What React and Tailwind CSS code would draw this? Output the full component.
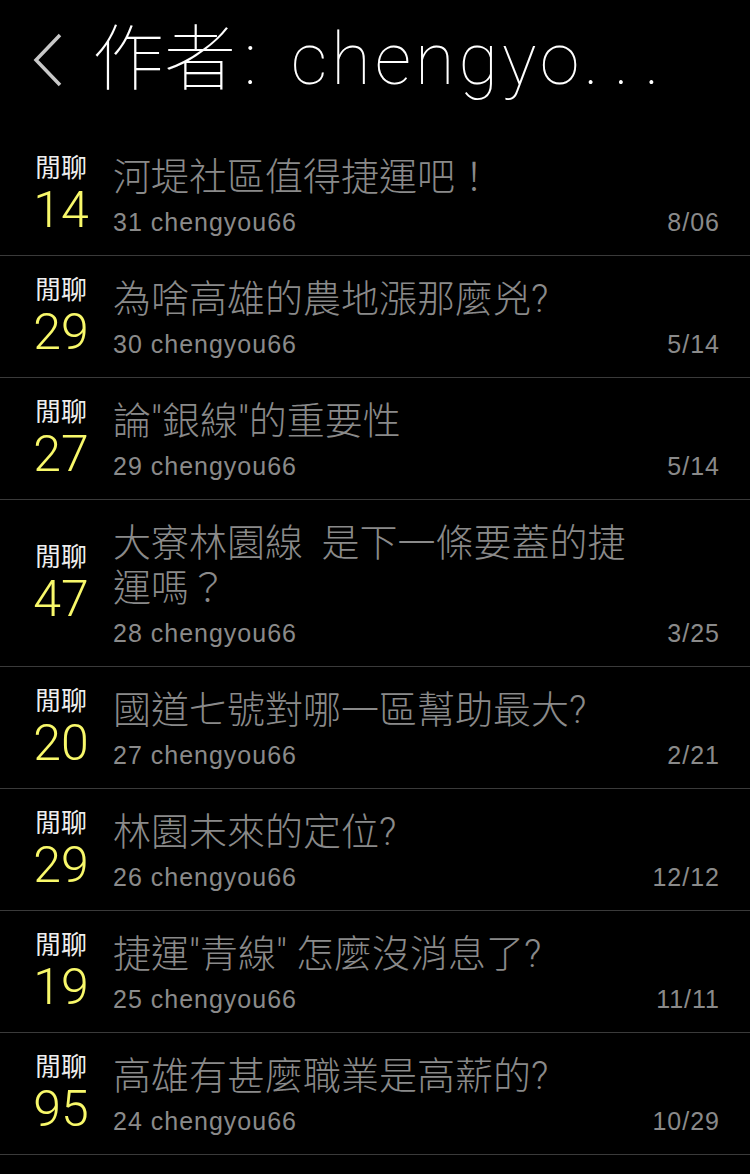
import React from "react";

const posts = [
  { count: 14, title: "河堤社區值得捷運吧！", no: 31, date: "8/06" },
  { count: 29, title: "為啥高雄的農地漲那麼兇?", no: 30, date: "5/14" },
  { count: 27, title: "論\"銀線\"的重要性", no: 29, date: "5/14" },
  { count: 47, title: "大寮林園線  是下一條要蓋的捷運嗎？", no: 28, date: "3/25" },
  { count: 20, title: "國道七號對哪一區幫助最大?", no: 27, date: "2/21" },
  { count: 29, title: "林園未來的定位?", no: 26, date: "12/12" },
  { count: 19, title: "捷運\"青線\" 怎麼沒消息了?", no: 25, date: "11/11" },
  { count: 95, title: "高雄有甚麼職業是高薪的?", no: 24, date: "10/29" },
];

const font = { fontFamily: '"Roboto", "Noto Sans CJK TC", sans-serif' };
const metaFont = { fontFamily: '"Liberation Sans", "Noto Sans CJK TC", sans-serif' };

const PostRow = ({ post }) => (
  <div className="flex items-center border-b border-[#3a3a3a] pl-[30px] pr-[30px] pt-[21px] pb-[18px]">
    <div className="flex w-[62px] shrink-0 flex-col items-center">
      <span className="text-[26px] leading-[26px] text-[#eeeeee]">閒聊</span>
      <span className="mt-[3px] text-[50px] font-light leading-[53px] text-[#f8f86a]">
        {post.count}
      </span>
    </div>
    <div className="ml-[21px] flex-1">
      <div className="pr-[70px] text-[38px] font-light leading-[45px] text-[#8a8a8a] whitespace-pre-wrap">
        {post.title}
      </div>
      <div
        className="mt-[7px] flex items-end justify-between text-[25px] leading-[30px] tracking-[1px] text-[#8a8a8a]"
        style={metaFont}
      >
        <span>{post.no} chengyou66</span>
        <span>{post.date}</span>
      </div>
    </div>
  </div>
);

export default function App() {
  return (
    <div className="min-h-[1174px] w-[750px] bg-black" style={font}>
      <div className="flex h-[134px] items-center pb-[15px] pl-[33px]">
        <svg width="30" height="54" viewBox="0 0 30 54" className="shrink-0">
          <polyline
            points="27,2 3,27 27,52"
            fill="none"
            stroke="#c8c8c8"
            strokeWidth="3.5"
          />
        </svg>
        <h1 className="ml-[29px] whitespace-nowrap text-[72px] font-thin leading-none text-white">
          作者<span className="ml-[8px]">:</span>
          <span className="ml-[34px] tracking-[4px]">chengyo</span>
          <span className="tracking-[15px]">...</span>
        </h1>
      </div>
      {posts.map((post, i) => (
        <PostRow key={i} post={post} />
      ))}
    </div>
  );
}
